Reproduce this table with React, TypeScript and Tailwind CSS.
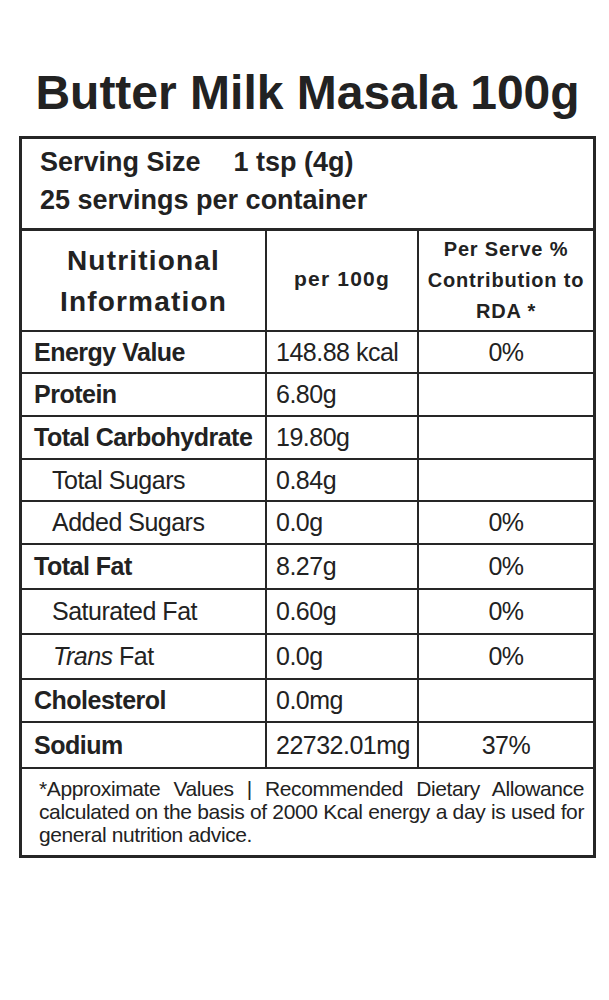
import React from "react";

type Row = {
  label: string;
  value: string;
  rda: string;
  kind: "bold" | "indent" | "trans";
  h: string;
};

const rows: Row[] = [
  { label: "Energy Value", value: "148.88 kcal", rda: "0%", kind: "bold", h: "h-[42px]" },
  { label: "Protein", value: "6.80g", rda: "", kind: "bold", h: "h-[43px]" },
  { label: "Total Carbohydrate", value: "19.80g", rda: "", kind: "bold", h: "h-[43px]" },
  { label: "Total Sugars", value: "0.84g", rda: "", kind: "indent", h: "h-[42px]" },
  { label: "Added Sugars", value: "0.0g", rda: "0%", kind: "indent", h: "h-[43px]" },
  { label: "Total Fat", value: "8.27g", rda: "0%", kind: "bold", h: "h-[45px]" },
  { label: "Saturated Fat", value: "0.60g", rda: "0%", kind: "indent", h: "h-[45px]" },
  { label: "Fat", value: "0.0g", rda: "0%", kind: "trans", h: "h-[45px]" },
  { label: "Cholesterol", value: "0.0mg", rda: "", kind: "bold", h: "h-[43px]" },
  { label: "Sodium", value: "22732.01mg", rda: "37%", kind: "bold", h: "h-[46px]" },
];

function Label({ row }: { row: Row }) {
  if (row.kind === "bold") {
    return <span className="pl-[12px] font-bold">{row.label}</span>;
  }
  if (row.kind === "trans") {
    return (
      <span className="pl-[31px]">
        <span className="italic">Trans</span> Fat
      </span>
    );
  }
  return <span className="pl-[30px]">{row.label}</span>;
}

export default function App() {
  return (
    <div className="min-h-[1000px] w-[609px] bg-white font-['Liberation_Sans',Arial,sans-serif] text-[#222]">
      <div className="h-[65px]" />
      <h1 className="ml-[19px] w-[577px] text-center text-[48px] font-bold leading-[56px]">
        Butter Milk Masala 100g
      </h1>
      <div className="h-[15px]" />
      <div className="ml-[19px] w-[577px] border-[3px] border-[#262626]">
        {/* Serving */}
        <div className="h-[92px] border-b-[3px] border-[#262626] pl-[18px] pt-[4px] text-[27px] font-bold leading-[38px]">
          <div>
            <span>Serving Size</span>
            <span className="ml-[33px]">1 tsp (4g)</span>
          </div>
          <div>25 servings per container</div>
        </div>

        {/* Header */}
        <div className="flex h-[101px] border-b-2 border-[#262626]">
          <div className="flex w-[245px] items-center justify-center border-r-2 border-[#262626] text-center text-[28px] font-bold leading-[41px] tracking-[1.2px]">
            <div className="pt-[1px]">
              Nutritional
              <br />
              Information
            </div>
          </div>
          <div className="flex w-[152px] items-center justify-center border-r-2 border-[#262626] pb-[4px] text-[21px] font-bold tracking-[1.2px]">
            per 100g
          </div>
          <div className="flex flex-1 items-center justify-center text-center text-[20px] font-bold leading-[31px] tracking-[0.8px]">
            <div>
              Per Serve %
              <br />
              Contribution to
              <br />
              RDA *
            </div>
          </div>
        </div>

        {/* Rows */}
        {rows.map((row, i) => (
          <div key={i} className={`flex ${row.h} border-b-2 border-[#262626] text-[25px] leading-none tracking-[-0.5px]`}>
            <div className="flex w-[245px] items-center border-r-2 border-[#262626]">
              <Label row={row} />
            </div>
            <div className="flex w-[152px] items-center border-r-2 border-[#262626] pl-[9px]">
              {row.value}
            </div>
            <div className="flex flex-1 items-center justify-center">{row.rda}</div>
          </div>
        ))}

        {/* Footer */}
        <div className="h-[86px] pl-[17px] pr-[9px] pt-[8px] text-justify text-[21px] leading-[23px] tracking-[-0.4px]">
          *Approximate Values | Recommended Dietary Allowance calculated on the basis of 2000 Kcal energy a day is used for general nutrition advice.
        </div>
      </div>
    </div>
  );
}
